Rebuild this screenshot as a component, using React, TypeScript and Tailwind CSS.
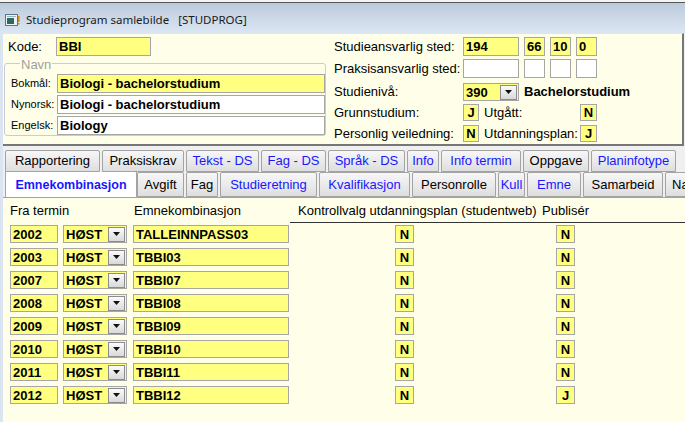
import type { ReactNode } from "react";

const CREAM = "bg-[#ffffe9]";

function Field({
  className = "",
  yellow = true,
  bold = true,
  center = false,
  children,
}: {
  className?: string;
  yellow?: boolean;
  bold?: boolean;
  center?: boolean;
  children?: ReactNode;
}) {
  return (
    <div
      className={`flex shrink-0 items-center border border-[#a6a6a6] text-[13px] leading-none ${
        bold ? "font-bold" : ""
      } ${yellow ? "bg-[#ffff80]" : "bg-white"} ${
        center ? "justify-center" : "pl-[2px]"
      } ${className}`}
    >
      {children}
    </div>
  );
}

function DropBtn() {
  return (
    <div className="flex h-[15px] w-[17px] items-center justify-center border border-[#8c8c8c] bg-linear-to-b from-[#fbfbfb] to-[#d9d9d9]">
      <svg width="7" height="4" viewBox="0 0 7 4">
        <path d="M0 0h7L3.5 4z" fill="#111" />
      </svg>
    </div>
  );
}

function Tab({
  label,
  blue,
  className,
}: {
  label: string;
  blue?: boolean;
  className: string;
}) {
  return (
    <div
      className={`flex shrink-0 items-center justify-center overflow-hidden whitespace-nowrap rounded-t-[2px] border border-[#a3a3a3] bg-linear-to-b from-[#f7f7f7] to-[#dedede] text-[13px] ${
        blue ? "text-[#1818ff]" : "text-black"
      } ${className}`}
    >
      {label}
    </div>
  );
}

const rows = [
  ["2002", "TALLEINNPASS03", "N", "N"],
  ["2003", "TBBI03", "N", "N"],
  ["2007", "TBBI07", "N", "N"],
  ["2008", "TBBI08", "N", "N"],
  ["2009", "TBBI09", "N", "N"],
  ["2010", "TBBI10", "N", "N"],
  ["2011", "TBBI11", "N", "N"],
  ["2012", "TBBI12", "N", "J"],
];

export default function App() {
  return (
    <div className="h-[422px] w-[685px] overflow-hidden bg-[#dae5f1] font-['Liberation_Sans',Arial,sans-serif] text-black">
      <div className="h-[3px] border-b border-[#555] bg-[#f4f4f4]" />
      {/* title bar */}
      <div className="flex h-[30px] items-center gap-[6px] bg-linear-to-b from-[#bccbdb] to-[#dbe6f3] pl-[5px] pt-[4px] font-['Noto_Sans',sans-serif] text-[11.5px] text-[#1b1b1b]">
        <svg width="15" height="13" viewBox="0 0 15 13">
          <rect x="0.5" y="0.5" width="12" height="11" fill="#eef2f6" stroke="#61758a" />
          <rect x="2" y="4" width="7" height="6" fill="#2d6a5e" />
          <rect x="2" y="2" width="9" height="1" fill="#9fb2c4" />
          <rect x="13" y="2" width="1.5" height="6" fill="#d08a1a" />
          <rect x="13" y="9" width="1.5" height="1.5" fill="#d08a1a" />
        </svg>
        <span>Studieprogram samlebilde</span>
        <span className="ml-[3px]">[STUDPROG]</span>
      </div>

      <div className="ml-[3px] flex h-[389px] flex-col bg-[#f0f0f0]">
        {/* header panel */}
        <div className={`flex h-[113px] w-[681px] shrink-0 border-t border-r-2 border-b-2 border-t-[#e4e4e4] border-r-[#777] border-b-[#777] ${CREAM} text-[13px]`}>
          <div className="w-[327px]">
            <div className="mt-[3px] flex h-[19px] items-center">
              <span className="w-[53px] pl-[5px]">Kode:</span>
              <Field className="h-[19px] w-[95px]">BBI</Field>
            </div>
            <div className="relative mt-[7px] ml-[1px] h-[73px] w-[322px] rounded-[3px] border border-[#c9ccd4] pt-[10px] pl-[6px]">
              <span className={`absolute top-[-9px] left-[15px] px-[1px] ${CREAM} text-[13px] text-[#a0a0a0]`}>
                Navn
              </span>
              <div className="flex h-[19px] items-center">
                <span className="w-[46px] text-[11px]">Bokmål:</span>
                <Field className="h-[19px] w-[268px]">Biologi - bachelorstudium</Field>
              </div>
              <div className="mt-[2px] flex h-[19px] items-center">
                <span className="w-[46px] text-[11px]">Nynorsk:</span>
                <Field yellow={false} className="h-[19px] w-[268px]">
                  Biologi - bachelorstudium
                </Field>
              </div>
              <div className="mt-[2px] flex h-[19px] items-center">
                <span className="w-[46px] text-[11px]">Engelsk:</span>
                <Field yellow={false} className="h-[19px] w-[268px]">
                  Biology
                </Field>
              </div>
            </div>
          </div>

          <div className="pl-[4px]">
            <div className="mt-[3px] flex h-[19px] items-center">
              <span className="w-[129px]">Studieansvarlig sted:</span>
              <Field className="h-[19px] w-[56px]">194</Field>
              <Field className="ml-[5px] h-[19px] w-[21px]">66</Field>
              <Field className="ml-[5px] h-[19px] w-[21px]">10</Field>
              <Field className="ml-[5px] h-[19px] w-[21px]">0</Field>
            </div>
            <div className="mt-[3px] flex h-[19px] items-center">
              <span className="w-[129px]">Praksisansvarlig sted:</span>
              <Field yellow={false} className="h-[19px] w-[56px]" />
              <Field yellow={false} className="ml-[5px] h-[19px] w-[21px]" />
              <Field yellow={false} className="ml-[5px] h-[19px] w-[21px]" />
              <Field yellow={false} className="ml-[5px] h-[19px] w-[21px]" />
            </div>
            <div className="mt-[5px] flex h-[18px] items-center">
              <span className="w-[129px]">Studienivå:</span>
              <Field className="h-[18px] w-[56px] justify-between pr-[1px]">
                <span>390</span>
                <DropBtn />
              </Field>
              <span className="ml-[5px] font-bold">Bachelorstudium</span>
            </div>
            <div className="mt-[3px] flex h-[17px] items-center">
              <span className="w-[129px]">Grunnstudium:</span>
              <Field center className="h-[17px] w-[16px]">J</Field>
              <span className="w-[101px] pl-[5px]">Utgått:</span>
              <Field center className="h-[17px] w-[17px]">N</Field>
            </div>
            <div className="mt-[4px] flex h-[17px] items-center">
              <span className="w-[129px]">Personlig veiledning:</span>
              <Field center className="h-[17px] w-[16px]">N</Field>
              <span className="w-[101px] pl-[5px]">Utdanningsplan:</span>
              <Field center className="h-[17px] w-[17px]">J</Field>
            </div>
          </div>
        </div>

        {/* tabs */}
        <div className="mt-[4px] flex h-[22px] shrink-0 gap-[2px] pl-[2px]">
          <Tab label="Rapportering" className="w-[95px]" />
          <Tab label="Praksiskrav" className="w-[82px]" />
          <Tab label="Tekst - DS" blue className="w-[73px]" />
          <Tab label="Fag - DS" blue className="w-[65px]" />
          <Tab label="Språk - DS" blue className="w-[77px]" />
          <Tab label="Info" blue className="w-[32px]" />
          <Tab label="Info termin" blue className="w-[80px]" />
          <Tab label="Oppgave" className="w-[66px]" />
          <Tab label="Planinfotype" blue className="w-[85px]" />
        </div>
        <div className="flex h-[26px] shrink-0 items-end overflow-hidden border-b border-[#a3a3a3] pl-[2px]">
          <div className="z-10 mb-[-1px] flex h-[27px] w-[132px] shrink-0 items-center justify-center rounded-t-[2px] border border-b-0 border-[#a3a3a3] bg-white text-[12.5px] font-bold text-[#1818ff]">
            Emnekombinasjon
          </div>
          <div className="flex h-[25px] gap-[2px]">
            <Tab label="Avgift" className="w-[47px]" />
            <Tab label="Fag" className="w-[32px]" />
            <Tab label="Studieretning" blue className="w-[97px]" />
            <Tab label="Kvalifikasjon" blue className="w-[91px]" />
            <Tab label="Personrolle" className="w-[84px]" />
            <Tab label="Kull" blue className="w-[27px]" />
            <Tab label="Emne" blue className="w-[54px]" />
            <Tab label="Samarbeid" className="w-[80px]" />
            <Tab label="Navn" className="w-[60px] justify-start pl-[6px]" />
          </div>
        </div>

        {/* content */}
        <div className={`flex-1 ${CREAM} text-[13px]`}>
          <div className="flex h-[24px] items-center pt-[1px] pl-[7px]">
            <span className="w-[124px]">Fra termin</span>
            <span className="w-[164px]">Emnekombinasjon</span>
            <span className="w-[244px]">Kontrollvalg utdanningsplan (studentweb)</span>
            <span>Publisér</span>
          </div>
          <div className="ml-[287px] border-b border-[#333]" />
          <div className="mt-[2px] flex flex-col gap-[5px] pl-[7px]">
            {rows.map(([year, komb, k, p]) => (
              <div key={year} className="flex h-[18px] items-center">
                <Field className="h-[18px] w-[48px]">{year}</Field>
                <Field className="ml-[5px] h-[18px] w-[64px] justify-between pr-[1px]">
                  <span>HØST</span>
                  <DropBtn />
                </Field>
                <Field className="ml-[6px] h-[18px] w-[156px]">{komb}</Field>
                <Field center className="ml-[106px] h-[18px] w-[19px]">
                  {k}
                </Field>
                <Field center className="ml-[142px] h-[18px] w-[19px]">
                  {p}
                </Field>
              </div>
            ))}
          </div>
        </div>
      </div>
    </div>
  );
}
